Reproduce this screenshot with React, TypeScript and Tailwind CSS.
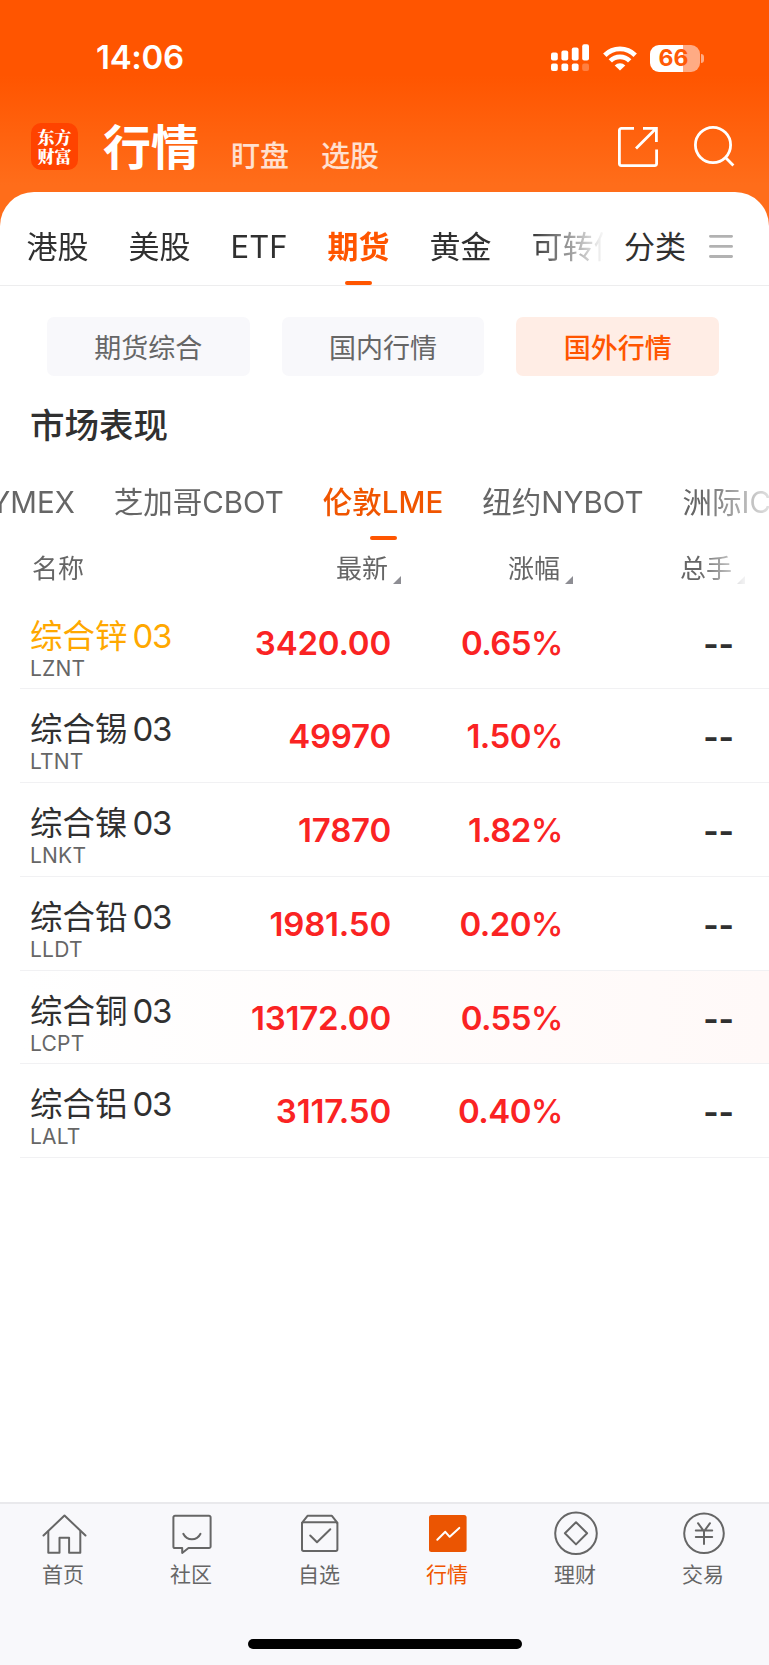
import type { ReactNode } from 'react'
import clsx from 'clsx'

type Quote = {
  name: string
  code: string
  price: string
  change: string
  watched?: boolean
  flash?: boolean
}

const quotes: Quote[] = [
  { name: '综合锌', code: 'LZNT', price: '3420.00', change: '0.65', watched: true },
  { name: '综合锡', code: 'LTNT', price: '49970', change: '1.50' },
  { name: '综合镍', code: 'LNKT', price: '17870', change: '1.82' },
  { name: '综合铅', code: 'LLDT', price: '1981.50', change: '0.20' },
  { name: '综合铜', code: 'LCPT', price: '13172.00', change: '0.55', flash: true },
  { name: '综合铝', code: 'LALT', price: '3117.50', change: '0.40' },
]

const marketTabs = ['港股', '美股', 'ETF', '期货', '黄金', '可转债']

const sections = ['期货综合', '国内行情', '国外行情']

const exchanges = ['NYMEX', '芝加哥CBOT', '伦敦LME', '纽约NYBOT', '洲际ICE']

function SignalIcon() {
  return (
    <svg className="w-[38px] h-[28px]" viewBox="0 0 38 28" fill="#fff">
      <rect x="0" y="8.5" width="6.8" height="8" rx="2" />
      <rect x="10.4" y="6.5" width="6.8" height="10" rx="2" />
      <rect x="20.8" y="3.5" width="6.8" height="13" rx="2" />
      <rect x="31.2" y="0.3" width="6.8" height="16.2" rx="2" />
      <rect x="0" y="19.6" width="6.8" height="7.4" rx="2" />
      <rect x="10.4" y="19.6" width="6.8" height="7.4" rx="2" />
      <rect x="20.8" y="19.6" width="6.8" height="7.4" rx="2" />
      <rect x="31.2" y="19.6" width="6.8" height="7.4" rx="2" opacity="0.25" />
    </svg>
  )
}

function WifiIcon() {
  return (
    <svg className="w-[34px] h-[25px]" viewBox="0 0 34 25" fill="none" stroke="#fff" strokeWidth="4.8">
      <path d="M1.8 9.2a21.6 21.6 0 0 1 30.4 0" />
      <path d="M7.3 14.9a13.8 13.8 0 0 1 19.4 0" />
      <path d="M17 24.6l-5.3-5.2a7.5 7.5 0 0 1 10.6 0z" fill="#fff" stroke="none" />
    </svg>
  )
}

function Battery() {
  return (
    <div className="flex items-center gap-px">
      <div className="flex h-[27px] w-[50px] items-center justify-center rounded-[9px] bg-[linear-gradient(to_right,#fff_66%,#ffab84_66%)] pr-[3px] text-[23px] font-bold leading-none text-[#ff5a06]">
        66
      </div>
      <div className="h-[9px] w-[3px] rounded-r-full bg-[#ffab84]" />
    </div>
  )
}

function StatusBar() {
  return (
    <div className="flex h-[115px] items-start justify-between pl-[96px] pr-[65px]">
      <span className="pt-[37px] text-[33px] font-semibold leading-[40px] tracking-[-0.3px]">14:06</span>
      <div className="flex items-center pt-[44px]">
        <SignalIcon />
        <div className="ml-[14px]">
          <WifiIcon />
        </div>
        <div className="ml-[13px]">
          <Battery />
        </div>
      </div>
    </div>
  )
}

function Header() {
  return (
    <div className="flex h-[77px] items-start pl-[31px]">
      <div className="mt-[8px] flex h-[47px] w-[47px] flex-col items-center justify-center rounded-[10px] bg-[#ff4300] pb-px font-['Noto_Serif_CJK_SC','Noto_Sans_CJK_SC',serif] text-[17px] font-black leading-[19px]">
        <span>东方</span>
        <span>财富</span>
      </div>
      <h1 className="ml-[25px] mt-[2px] text-[48px] font-bold leading-[62px]">行情</h1>
      <span className="ml-[32px] mt-[22px] text-[29px] font-medium leading-[40px] text-white/80">盯盘</span>
      <span className="ml-[32px] mt-[22px] text-[29px] font-medium leading-[40px] text-white/80">选股</span>
      <svg className="ml-auto mt-[11px] h-[41px] w-[41px]" viewBox="0 0 41 41" fill="none" stroke="#fff" strokeWidth="2.8">
        <path d="M17 2.4H4.4a2 2 0 0 0-2 2v33.2a2 2 0 0 0 2 2h33.2a2 2 0 0 0 2-2V23.5" />
        <path d="M26 2.4h13.4V16M39 2.6L19 22.5" />
      </svg>
      <svg className="ml-[36px] mr-[34px] mt-[11px] h-[41px] w-[41px]" viewBox="0 0 41 41" fill="none" stroke="#fff" strokeWidth="2.8">
        <circle cx="19" cy="19" r="17.6" />
        <path d="M31.2 31.2l8.2 8.4" />
      </svg>
    </div>
  )
}

function MarketTabs() {
  return (
    <div className="flex h-[94px] border-b border-[#ededee] text-[31px] leading-[40px] text-[#303030]">
      <div className="flex w-[603px] gap-[40px] overflow-hidden whitespace-nowrap pl-[26.5px] [mask-image:linear-gradient(to_right,#000_530px,transparent_606px)]">
        {marketTabs.map((tab) => (
          <div
            key={tab}
            className={clsx('flex shrink-0 flex-col items-center pt-[35px]', tab === '期货' && 'font-bold text-[#ff5500]')}
          >
            {tab}
            {tab === '期货' && <div className="mt-[14px] h-[4px] w-[27px] rounded-full bg-[#ff5500]" />}
          </div>
        ))}
      </div>
      <div className="pl-[21px] pt-[35px]">分类</div>
      <svg className="ml-[23px] mt-[42px] h-[25px] w-[24px]" viewBox="0 0 24 25" stroke="#b2b2b2" strokeWidth="2.8" strokeLinecap="round">
        <path d="M1.4 2.3h21.2M1.4 12.4h21.2M1.4 22.5h21.2" />
      </svg>
    </div>
  )
}

function SectionChips() {
  return (
    <div className="flex gap-[32px] pl-[47px] pr-[50px] pt-[31px]">
      {sections.map((label) => (
        <div
          key={label}
          className={clsx(
            'flex h-[59px] flex-1 items-center justify-center rounded-[7px] pt-[5px] text-[27px]',
            label === '国外行情' ? 'bg-[#ffede5] font-medium text-[#ff5500]' : 'bg-[#f8f8fb] text-[#666]',
          )}
        >
          {label}
        </div>
      ))}
    </div>
  )
}

function ExchangeTabs() {
  return (
    <div className="flex h-[69px] overflow-hidden whitespace-nowrap text-[29.5px] leading-[40px] text-[#666] [mask-image:linear-gradient(to_right,#000_700px,rgba(0,0,0,0.2)_769px)]">
      <div className="-ml-[32px] flex gap-[39px]">
        {exchanges.map((name) => (
          <div
            key={name}
            className={clsx('flex shrink-0 flex-col items-center', name === '伦敦LME' && 'font-medium text-[#f05500]')}
          >
            {name}
            {name === '伦敦LME' && <div className="mt-[14px] h-[4px] w-[27px] rounded-full bg-[#ff5500]" />}
          </div>
        ))}
      </div>
    </div>
  )
}

function SortLabel({ children }: { children: ReactNode }) {
  return (
    <div className="flex h-[36px] items-end justify-end gap-[5px]">
      {children}
      <svg className="mb-[3px] h-[8px] w-[8px]" viewBox="0 0 8 8" fill="#8d8d93">
        <path d="M8 0v8H0z" />
      </svg>
    </div>
  )
}

function TableHead() {
  return (
    <div className="grid h-[44.5px] grid-cols-[401px_172px_172px] items-start text-[26px] leading-[36px] text-[#666] [mask-image:linear-gradient(to_right,#000_700px,transparent_750px)]">
      <div className="flex justify-between pl-[32px]">
        <span>名称</span>
        <SortLabel>最新</SortLabel>
      </div>
      <SortLabel>涨幅</SortLabel>
      <SortLabel>总手</SortLabel>
    </div>
  )
}

function QuoteRow({ quote }: { quote: Quote }) {
  return (
    <div
      className={clsx(
        'ml-[20px] flex h-[93.8px] border-b border-[#f1f1f3] text-[33px] leading-[40px]',
        quote.flash && 'bg-linear-to-r from-white to-[#fff9f8]',
      )}
    >
      <div className="w-[170px] shrink-0 pl-[10px] pt-[20px]">
        <div className={clsx('flex items-baseline gap-[5px]', quote.watched ? 'text-[#ffa800]' : 'text-[#303030]')}>
          <span className="text-[32.5px]">{quote.name}</span>
          <span className="tracking-[-1.3px]">03</span>
        </div>
        <div className="text-[21px] leading-[24px] tracking-[0.2px] text-[#666]">{quote.code}</div>
      </div>
      <div className="w-[201px] pt-[27px] text-right font-semibold tracking-[-0.2px] text-[#fa2323]">{quote.price}</div>
      <div className="w-[172px] pt-[27px] text-right font-semibold tracking-[-0.6px] text-[#fa2323]">
        {quote.change}
        <span className="font-medium">%</span>
      </div>
      <div className="flex-1 pr-[35px] pt-[28px] text-right font-bold text-[#303030]">--</div>
    </div>
  )
}

const navItems: { label: string; active?: boolean; icon: ReactNode }[] = [
  {
    label: '首页',
    icon: (
      <>
        <path d="M1.5 23.5L22.5 3.5l21 20" />
        <path d="M6.3 19.5v21.3h11.2V25.7h9.6v15.1h11.2V19.5" />
      </>
    ),
  },
  {
    label: '社区',
    icon: (
      <>
        <path d="M5 3.8h34a1.6 1.6 0 0 1 1.6 1.6v29a1.6 1.6 0 0 1-1.6 1.6H18.5l-6.3 5V36H5a1.6 1.6 0 0 1-1.6-1.6v-29A1.6 1.6 0 0 1 5 3.8z" />
        <path d="M13.3 21.8c3.6 7.4 13.6 7.4 17.2 0" />
      </>
    ),
  },
  {
    label: '自选',
    icon: (
      <>
        <rect x="4" y="10.3" width="35.4" height="28.6" rx="1.6" />
        <path d="M4 10.8l5.5-7h24.4l5.5 7" />
        <path d="M12.2 23.5l6.8 6.8 13.3-13" />
      </>
    ),
  },
  {
    label: '行情',
    active: true,
    icon: (
      <>
        <rect x="3" y="3" width="37.6" height="37" rx="2.5" fill="#eb5502" stroke="none" />
        <path d="M11.3 27.7l8-7.9 4.4 5 9.6-8.9" stroke="#fff" />
      </>
    ),
  },
  {
    label: '理财',
    icon: (
      <>
        <circle cx="22" cy="21.3" r="20.8" />
        <path d="M22 10.2l11.1 11.1L22 32.4 10.9 21.3z" />
      </>
    ),
  },
  {
    label: '交易',
    icon: (
      <>
        <circle cx="22" cy="21.3" r="19.8" />
        <path d="M16 11.2l6 8.2 6-8.2M22 19.4V32M13.8 18.6h16.4M13.8 25h16.4" />
      </>
    ),
  },
]

function BottomNav() {
  return (
    <nav className="flex h-[163px] shrink-0 flex-col items-center border-t-2 border-[#e9e9ec] bg-[#f8f8fb]">
      <div className="flex w-[768px] self-start text-[21px] leading-[28px] text-[#666]">
        {navItems.map((item) => (
          <div
            key={item.label}
            className={clsx('flex flex-1 flex-col items-center pt-[8px]', item.active && 'text-[#f05500]')}
          >
            <svg
              className="h-[44px] w-[44px] overflow-visible"
              viewBox="0 0 44 44"
              fill="none"
              stroke="#666"
              strokeWidth="2"
              strokeLinecap="round"
              strokeLinejoin="round"
            >
              {item.icon}
            </svg>
            <span className="mr-[2px] mt-[5px]">{item.label}</span>
          </div>
        ))}
      </div>
      <div className="mb-[16px] mt-auto h-[10px] w-[274px] rounded-full bg-black" />
    </nav>
  )
}

export default function App() {
  return (
    <div className="flex h-[1665px] w-[769px] flex-col overflow-hidden bg-[linear-gradient(to_bottom,#ff5500_75px,#ff6d1a_185px)] font-['Inter','Noto_Sans_CJK_SC',sans-serif]">
      <header className="shrink-0 text-white">
        <StatusBar />
        <Header />
      </header>
      <main className="flex-1 rounded-t-[34px] bg-white">
        <MarketTabs />
        <SectionChips />
        <h2 className="pl-[30px] pt-[29px] text-[34.5px] font-medium leading-[42px] text-[#303030]">市场表现</h2>
        <div className="pt-[35px]">
          <ExchangeTabs />
        </div>
        <TableHead />
        <div>
          {quotes.map((quote) => (
            <QuoteRow key={quote.code} quote={quote} />
          ))}
        </div>
      </main>
      <BottomNav />
    </div>
  )
}
